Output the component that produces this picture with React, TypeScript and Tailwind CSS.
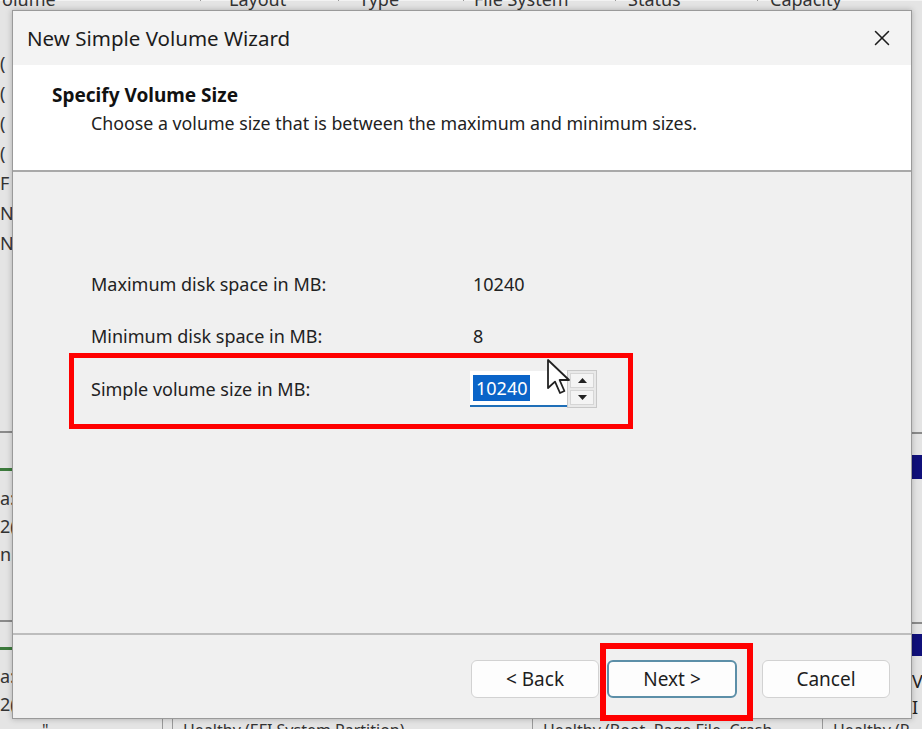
import { X } from 'lucide-react'

const font = { fontFamily: '"Noto Sans", "Open Sans", sans-serif' }

function Cursor() {
  return (
    <svg width="26" height="38" viewBox="0 0 13 19" className="absolute left-[546px] top-[358px]">
      <path d="M1 1 L1 15 L4.5 11.8 L7 17.5 L9.2 16.5 L6.8 11 L11.5 11 Z" fill="#fff" stroke="#222" strokeWidth="0.9" strokeLinejoin="round" />
    </svg>
  )
}

function Spinner() {
  return (
    <div className="flex flex-col w-[30px] h-[38px] border border-[#c8c8c8] bg-[#e9e9e9] p-[2px] gap-[2px]">
      <div className="flex-1 flex items-center justify-center bg-[#f4f4f4] border border-[#d6d6d6]">
        <svg width="9" height="5" viewBox="0 0 9 5"><path d="M0 5 L4.5 0 L9 5 Z" fill="#222" /></svg>
      </div>
      <div className="flex-1 flex items-center justify-center bg-[#f4f4f4] border border-[#d6d6d6]">
        <svg width="9" height="5" viewBox="0 0 9 5"><path d="M0 0 L4.5 5 L9 0 Z" fill="#222" /></svg>
      </div>
    </div>
  )
}

function WizButton({ label, primary }: { label: string; primary?: boolean }) {
  return (
    <div
      className={
        'h-[38px] rounded-[6px] bg-[#fdfdfd] flex items-center justify-center text-[19px] text-[#1e1e1e] ' +
        (primary ? 'w-[130px] border-2 border-[#5c8fa8]' : 'w-[128px] border border-[#d2d2d2]')
      }
    >
      {label}
    </div>
  )
}

export default function App() {
  return (
    <div className="relative w-[922px] h-[729px] overflow-hidden bg-[#e4e4e4] text-[#202020]" style={font}>
      {/* window behind the wizard */}
      <div className="absolute left-0 top-0 w-[922px] h-[11px] bg-[#f2f2f2] text-[18px] leading-[18px] text-[#333] -mt-[10px] flex">
        <span className="w-[200px] pl-[2px]">olume</span>
        <span className="w-[138px] pl-[28px] border-l border-[#999]">Layout</span>
        <span className="w-[125px] pl-[20px] border-l border-[#999]">Type</span>
        <span className="w-[152px] pl-[10px] border-l border-[#999]">File System</span>
        <span className="w-[142px] pl-[12px] border-l border-[#999]">Status</span>
        <span className="pl-[12px] border-l border-[#999]">Capacity</span>
      </div>
      <div className="absolute left-0 top-[48px] w-[12px] flex flex-col text-[18px] leading-[30px] text-[#333]">
        <span>(</span><span>(</span><span>(</span><span>(</span><span>F</span><span>N</span><span>N</span>
      </div>
      <div className="absolute left-0 top-[431px] w-[12px] h-[2px] bg-[#8a8a8a]" />
      <div className="absolute left-0 top-[468px] w-[12px] h-[3px] bg-[#3c7a3c]" />
      <div className="absolute left-0 top-[484px] w-[12px] flex flex-col text-[18px] leading-[28px] text-[#333] overflow-hidden">
        <span>a:</span><span>2(</span><span>n</span>
      </div>
      <div className="absolute left-0 top-[620px] w-[12px] h-[2px] bg-[#8a8a8a]" />
      <div className="absolute left-0 top-[647px] w-[12px] h-[3px] bg-[#3c7a3c]" />
      <div className="absolute left-0 top-[662px] w-[12px] flex flex-col text-[18px] leading-[28px] text-[#333] overflow-hidden">
        <span>a:</span><span>2(</span>
      </div>
      <div className="absolute left-[912px] top-[432px] w-[10px] h-[2px] bg-[#8a8a8a]" />
      <div className="absolute left-[912px] top-[455px] w-[10px] h-[24px] bg-[#10107a]" />
      <div className="absolute left-[912px] top-[622px] w-[10px] h-[2px] bg-[#8a8a8a]" />
      <div className="absolute left-[912px] top-[634px] w-[10px] h-[22px] bg-[#10107a]" />
      <div className="absolute left-[912px] top-[668px] text-[18px] leading-[26px] text-[#222] flex flex-col">
        <span>V</span><span>I</span>
      </div>
      <div className="absolute left-[12px] top-[719px] w-[910px] h-[10px] flex text-[16px] leading-[22px] text-[#333] overflow-hidden">
        <span className="w-[150px] pl-[30px]">"</span>
        <span className="w-[10px] border-l border-[#999]" />
        <span className="w-[360px] pl-[10px] border-l border-[#999]">Healthy (EFI System Partition)</span>
        <span className="w-[290px] pl-[10px] border-l border-[#999]">Healthy (Boot, Page File, Crash</span>
        <span className="pl-[10px] border-l border-[#999]">Healthy (R</span>
      </div>

      {/* wizard dialog */}
      <div className="absolute left-[12px] top-[10px] w-[900px] h-[709px] flex flex-col bg-[#f0f0f0] border border-[#9a9a9a] shadow-[0_0_6px_rgba(0,0,0,0.25)]">
        <div className="h-[54px] shrink-0 bg-[#f3f3f3] flex items-center justify-between pl-[14px] pr-[16px]">
          <span className="text-[20.5px] text-[#1c1c1c]">New Simple Volume Wizard</span>
          <X size={26} strokeWidth={1.4} className="text-[#1c1c1c]" />
        </div>
        <div className="h-[107px] shrink-0 bg-white border-b-2 border-[#a9a9a9] pl-[39px] pt-[17px]">
          <div className="text-[19px] font-bold leading-[26px] text-[#111]">Specify Volume Size</div>
          <div className="pl-[39px] text-[17.8px] leading-[30px] text-[#222]">
            Choose a volume size that is between the maximum and minimum sizes.
          </div>
        </div>
        <div className="flex-1 flex flex-col pl-[78px] pt-[99px] gap-[26px] text-[18px] text-[#222]">
          <div className="flex items-center h-[26px]">
            <span className="w-[382px]">Maximum disk space in MB:</span>
            <span>10240</span>
          </div>
          <div className="flex items-center h-[26px]">
            <span className="w-[382px]">Minimum disk space in MB:</span>
            <span>8</span>
          </div>
          <div className="flex items-center h-[38px] -mt-[5px]">
            <span className="w-[379px]">Simple volume size in MB:</span>
            <div className="w-[97px] h-[36px] bg-white border-b-2 border-[#1f6fb8] flex items-center pl-[3px]">
              <span className="bg-[#0a64c8] text-white px-[3px] leading-[26px]">10240</span>
            </div>
            <Spinner />
          </div>
        </div>
        <div className="h-[85px] shrink-0 border-t-2 border-[#bdbdbd] flex items-start justify-end gap-[8px] pt-[25px] pr-[21px]">
          <WizButton label="< Back" />
          <WizButton label="Next >" primary />
          <div className="w-[9px]" />
          <WizButton label="Cancel" />
        </div>
      </div>

      {/* highlight boxes */}
      <div className="absolute left-[69px] top-[353px] w-[564px] h-[76px] border-[5px] border-[#ff0000]" />
      <div className="absolute left-[600px] top-[643px] w-[153px] h-[78px] border-[6px] border-[#ff0000]" />
      <Cursor />
    </div>
  )
}
